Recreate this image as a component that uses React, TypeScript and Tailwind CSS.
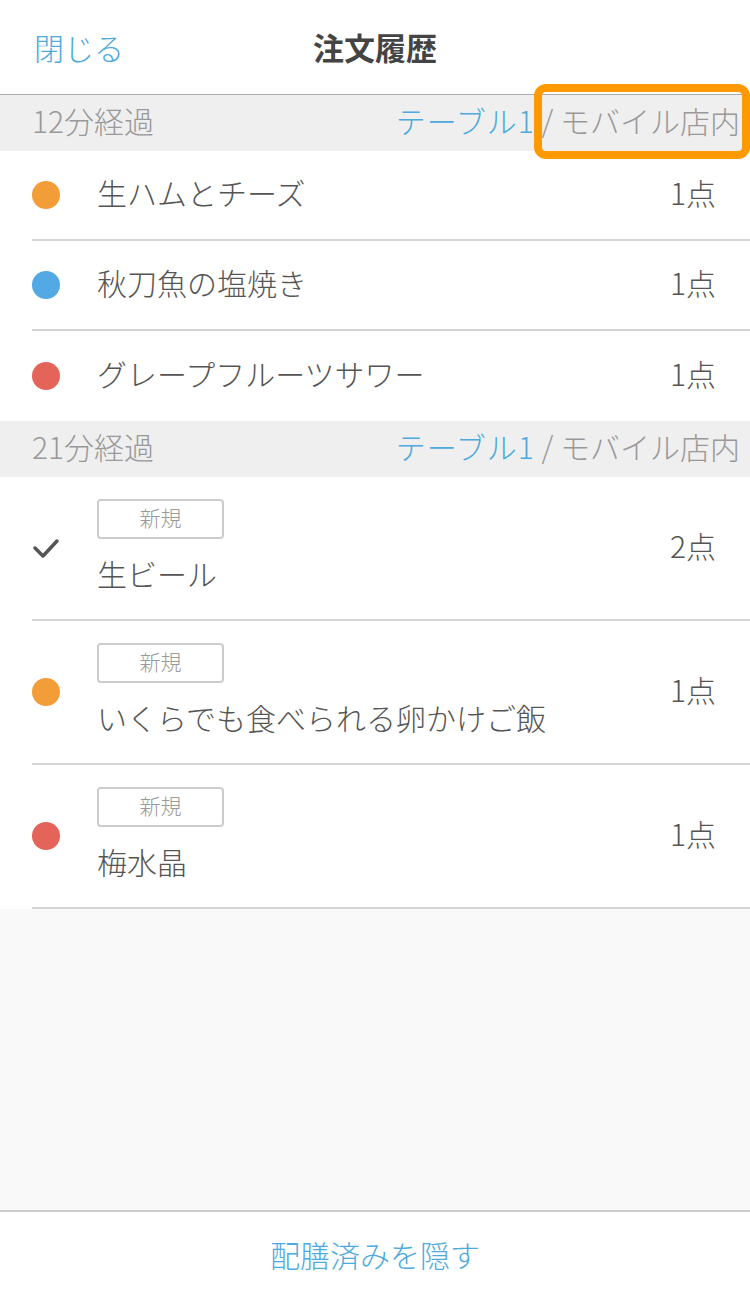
const font = { fontFamily: '"Noto Sans CJK JP", "Noto Sans", sans-serif' };

type Item = { name: string; count: string; mark: "orange" | "blue" | "red" | "check"; badge?: boolean };

const first: Item[] = [
  { name: "生ハムとチーズ", count: "1点", mark: "orange" },
  { name: "秋刀魚の塩焼き", count: "1点", mark: "blue" },
  { name: "グレープフルーツサワー", count: "1点", mark: "red" },
];

const second: Item[] = [
  { name: "生ビール", count: "2点", mark: "check", badge: true },
  { name: "いくらでも食べられる卵かけご飯", count: "1点", mark: "orange", badge: true },
  { name: "梅水晶", count: "1点", mark: "red", badge: true },
];

function Mark({ mark }: { mark: Item["mark"] }) {
  if (mark === "check") {
    return (
      <svg width="28" height="28" viewBox="0 0 28 28" className="shrink-0">
        <polyline points="3,14 11,22 25,7" fill="none" stroke="#555" strokeWidth="3.5" strokeLinecap="round" strokeLinejoin="round" />
      </svg>
    );
  }
  const color = mark === "orange" ? "bg-[#f29d38]" : mark === "blue" ? "bg-[#53a9e3]" : "bg-[#e5645a]";
  return <span className={`block h-[28px] w-[28px] shrink-0 rounded-full ${color}`} />;
}

function Row({ item, border }: { item: Item; border: boolean }) {
  return (
    <div
      className={`ml-[32px] flex items-center pr-[34px] ${item.badge ? "h-[144px]" : "h-[90px]"} ${
        border ? "border-b-2 border-[#d4d4d4]" : ""
      }`}
    >
      <Mark mark={item.mark} />
      <div className="ml-[37px] flex flex-1 flex-col items-start gap-[16px] pb-[6px]">
        {item.badge && (
          <span className="flex h-[40px] w-[127px] items-center justify-center rounded-[4px] border-2 border-[#cccccc] pb-[2px] text-[21px] text-[#999]">
            新規
          </span>
        )}
        <span className="text-[30px] leading-[36px] text-[#555]">{item.name}</span>
      </div>
      <span className="pb-[6px] text-[30px] text-[#555]">{item.count}</span>
    </div>
  );
}

function SectionHeader({ elapsed }: { elapsed: string }) {
  return (
    <div className="flex h-[56px] items-center justify-between bg-[#efefef] pb-[7px] pl-[32px] pr-[10px] text-[30px] leading-none">
      <span className="text-[#999]">{elapsed}</span>
      <span>
        <span className="tracking-[1px] text-[#4ea9dd]">テーブル1</span>
        <span className="text-[#999]"> / モバイル店内</span>
      </span>
    </div>
  );
}

export default function App() {
  return (
    <div style={font} className="relative flex h-[1300px] w-full flex-col bg-[#f9f9f9] font-light">
      <header className="grid h-[95px] grid-cols-[1fr_auto_1fr] items-center border-b border-[#aaa] bg-white">
        <span className="pl-[34px] text-[30px] text-[#4ea9dd]">閉じる</span>
        <span className="text-[31px] font-bold text-[#444]">注文履歴</span>
        <span />
      </header>

      <SectionHeader elapsed="12分経過" />
      <div className="bg-white">
        {first.map((it, i) => (
          <Row key={it.name} item={it} border={i < first.length - 1} />
        ))}
      </div>

      <SectionHeader elapsed="21分経過" />
      <div className="bg-white">
        {second.map((it) => (
          <Row key={it.name} item={it} border />
        ))}
      </div>

      <div className="flex-1" />

      <footer className="flex h-[90px] items-center justify-center border-t-2 border-[#cccccc] bg-white pb-[4px]">
        <span className="text-[30px] text-[#4ea9dd]">配膳済みを隠す</span>
      </footer>

      {/* highlight callout over the store type label */}
      <div className="pointer-events-none absolute left-[534px] top-[84px] h-[75px] w-[216px] rounded-[12px] border-[8px] border-[#ff9900]" />
    </div>
  );
}
